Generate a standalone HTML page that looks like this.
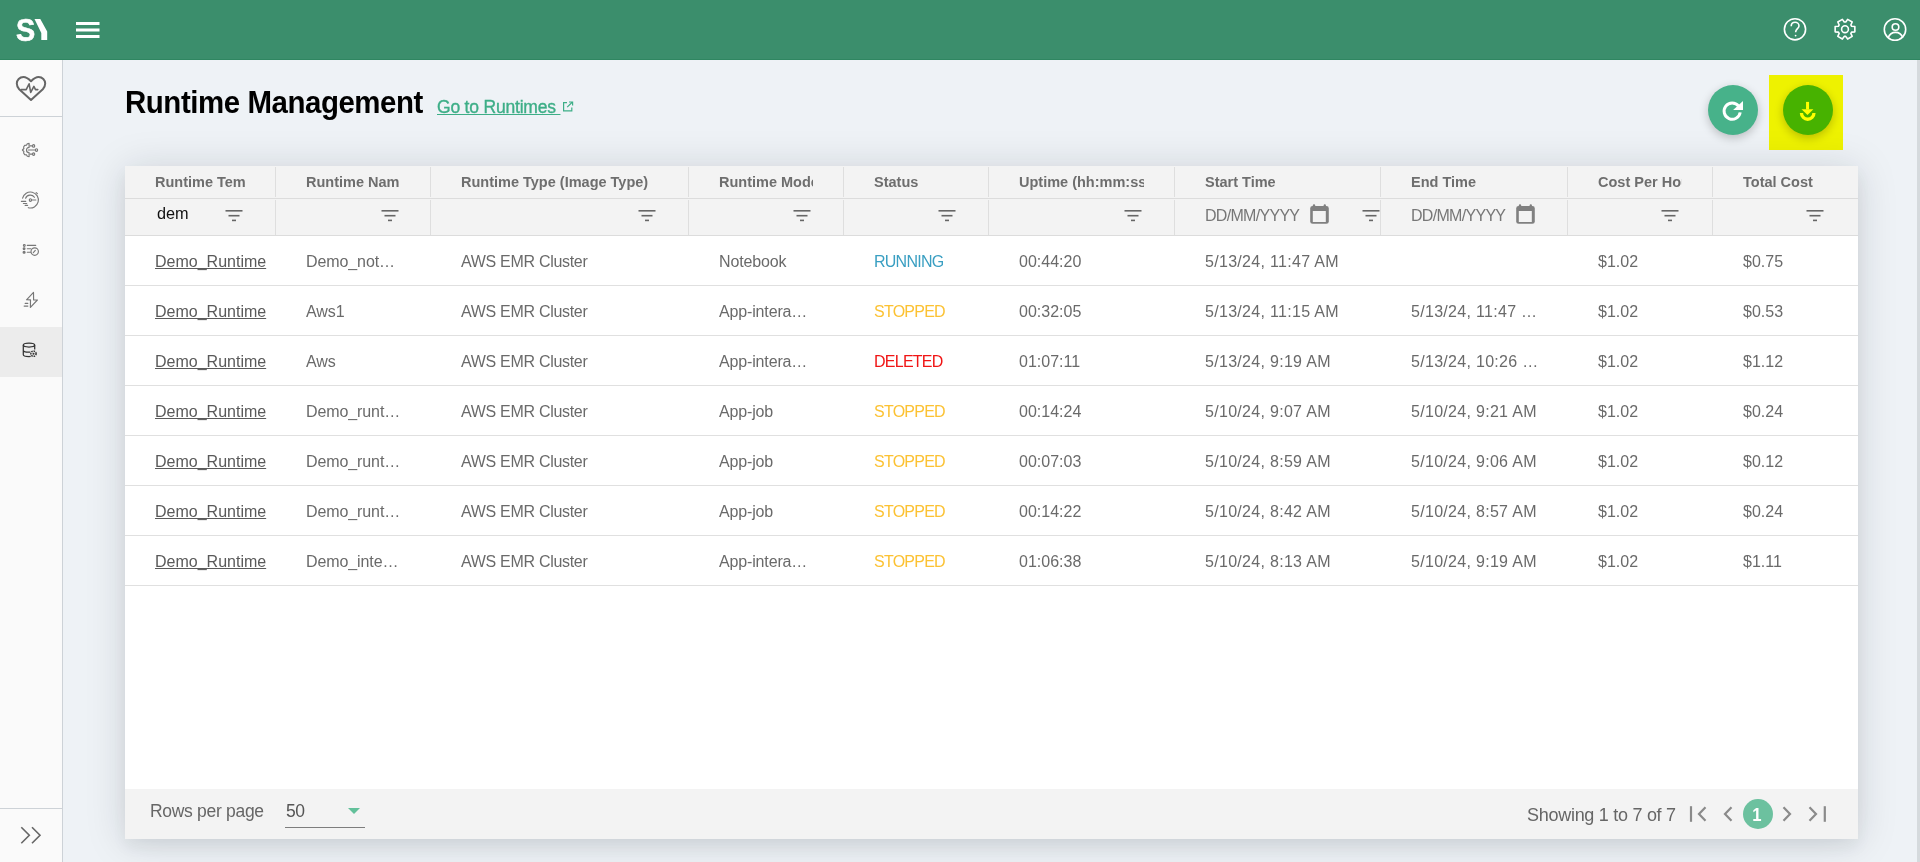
<!DOCTYPE html>
<html>
<head>
<meta charset="utf-8">
<style>
*{box-sizing:border-box;margin:0;padding:0}
html,body{width:1920px;height:862px;overflow:hidden;background:#eef2f6;font-family:"Liberation Sans",sans-serif;position:relative}
.abs{position:absolute}
#top{position:absolute;left:0;top:0;width:1920px;height:60px;background:#3b8e6c;border-bottom:1px solid #2f8661}
#side{position:absolute;left:0;top:60px;width:63px;height:802px;background:#fafafa;border-right:1px solid #cdd2d7}
#rstrip{position:absolute;left:1917px;top:60px;width:3px;height:802px;background:#d5dadd}
#card{position:absolute;left:125px;top:166px;width:1733px;height:673px;background:#fff;box-shadow:0 3px 38px rgba(20,30,40,0.15),0 8px 14px rgba(20,30,40,0.05)}
.hdr1{position:absolute;left:0;top:0;width:1733px;height:33px;background:#f3f3f3;border-bottom:1px solid #dcdcdc}
.hdr2{position:absolute;left:0;top:33px;width:1733px;height:37px;background:#f3f3f3;border-bottom:1px solid #dcdcdc}
.sep{position:absolute;width:1px;background:#dedede}
.ht{position:absolute;top:7px;font-size:14.5px;font-weight:700;color:#6e6e6e;white-space:nowrap;overflow:hidden;line-height:18px}
.row{position:absolute;left:0;width:1733px;height:50px;border-bottom:1px solid #e0e0e0}
.c{position:absolute;top:1px;line-height:49px;font-size:16px;color:#6a6a6a;white-space:nowrap}
.lnk{color:#5a5a5a;text-decoration:underline;text-underline-offset:1px}
.run{color:#3a9fc2}.stop{color:#fcc233}.del{color:#f01515}
#foot{position:absolute;left:0;top:623px;width:1733px;height:50px;background:#f3f3f3}
.btn{position:absolute;width:50px;height:50px;border-radius:50%;box-shadow:0 3px 10px rgba(0,0,0,0.22)}
</style>
</head>
<body>
<div id="top">
  <div class="abs" style="left:15.5px;top:13.6px;font-size:31px;font-weight:700;color:#fff;line-height:34px;transform:scaleX(0.93);transform-origin:0 0;-webkit-text-stroke:0.6px #fff">S</div>
  <svg class="abs" style="left:0;top:0" width="60" height="60"><polygon points="34.5,19 40.3,19 47.2,31.5 47.2,40 41.3,40 41.3,33" fill="#fff"/></svg>
  <svg class="abs" style="left:0;top:0" width="110" height="60">
    <rect x="76" y="22" width="23.5" height="3" fill="#fff"/>
    <rect x="76" y="28.5" width="23.5" height="3" fill="#fff"/>
    <rect x="76" y="35" width="23.5" height="3" fill="#fff"/>
  </svg>
  <svg class="abs" style="left:1770px;top:0" width="150" height="60" fill="none" stroke="#fff" stroke-width="1.6">
    <circle cx="25" cy="29.3" r="10.6"/>
    <path d="M21.2 26.2c0-2.3 1.7-3.9 3.9-3.9s3.9 1.6 3.9 3.6c0 2.6-3.4 3-3.4 6.3"/>
    <circle cx="25.6" cy="35.6" r="0.9" fill="#fff" stroke="none"/>
    <circle cx="75" cy="29.2" r="3.4"/>
    <path d="M81.58 26.27 L84.85 26.56 L84.85 31.84 L81.58 32.13 L80.82 33.43 L82.21 36.41 L77.64 39.05 L75.75 36.36 L74.25 36.36 L72.36 39.05 L67.79 36.41 L69.18 33.43 L68.42 32.13 L65.15 31.84 L65.15 26.56 L68.42 26.27 L69.18 24.97 L67.79 21.99 L72.36 19.35 L74.25 22.04 L75.75 22.04 L77.64 19.35 L82.21 21.99 L80.82 24.97Z" stroke-linejoin="round"/>
    <circle cx="125" cy="29.5" r="10.7"/>
    <circle cx="125.5" cy="27" r="3.3"/>
    <path d="M118.2 37.6c1.2-3.2 4-5.2 7.3-5.2s6.1 2 7.3 5.2"/>
  </svg>
</div>
<div id="side">
  <div class="abs" style="left:0;top:56px;width:62px;height:1px;background:#cdd2d7"></div>
  <svg class="abs" style="left:0;top:0" width="62" height="60" fill="none" stroke="#666" stroke-width="2" stroke-linejoin="round" stroke-linecap="round">
    <path d="M31 21.3c-3-3.2-5.2-4.3-7.6-4.3-3.8 0-6.6 3-6.6 6.6 0 2.1.9 4 2.4 5.6L31 40l11.8-10.8c1.5-1.6 2.4-3.5 2.4-5.6 0-3.6-2.8-6.6-6.6-6.6-2.4 0-4.6 1.1-7.6 4.3z" transform="translate(0,0)"/>
    <path d="M21.2 29.6h5l2.9-5.8 1.6 8.6 3.2-6 1.6 3.2h2.3" stroke-width="1.6"/>
  </svg>
  <div class="abs" style="left:0;top:267px;width:62px;height:50px;background:#ececec"></div>
  <svg class="abs" style="left:0;top:-60px" width="62" height="380" fill="none" stroke="#777" stroke-width="1.15" stroke-linecap="round" stroke-linejoin="round">
    <path d="M29.1 143.4 L27.3 143.7 L26.6 145.1 L24.7 145.4 L23.6 147 L23.9 148.5 L22.4 150 L23.9 151.5 L23.6 153 L24.7 154.6 L26.6 154.9 L27.3 156.3 L29.1 156.6 L29.1 152.6 A2.6 2.6 0 0 1 29.1 147.4 Z"/>
    <path d="M28.4 150 H35.2 M30 145.9 H32.3 M30 154.1 H32.3"/>
    <ellipse cx="33.6" cy="145.9" rx="1.1" ry="1.3"/><ellipse cx="36.5" cy="150" rx="1.1" ry="1.3"/><ellipse cx="33.6" cy="154.1" rx="1.1" ry="1.3"/>
    <path d="M22.6 198.2 A8 8 0 1 1 28.3 207.7"/>
    <path d="M25.6 198.2 A5 5 0 0 1 34.4 197.3"/>
    <ellipse cx="30.4" cy="200" rx="1.1" ry="1.3"/><path d="M31.7 200 H35.8"/>
    <path d="M36.2 192.6 L37.4 193.6"/>
    <path d="M21.4 201.4 H25.7 M23.4 203.5 H26.7 M25.2 205.4 H27.6"/>
    <circle cx="24.3" cy="245.4" r="0.9"/><path d="M27.3 245.4 H35.7"/>
    <circle cx="24.1" cy="248.8" r="0.9" fill="#777"/><path d="M27.3 248.7 H30.8"/>
    <circle cx="24.1" cy="252.2" r="1" fill="#777"/><path d="M27.3 252.2 H30.5"/>
    <circle cx="34.7" cy="251.6" r="3.7"/><path d="M33.3 252.6 L35.3 250.4"/>
    <path d="M33.5 292.4 L26.5 299.8 L30.5 299.9 L30.4 307.4 L37.4 300 L33.6 299.9 Z"/>
    <path d="M25.2 303.3 H27.8 M24.2 306.1 H27.8" stroke-width="1.3"/>
  </svg>
  <svg class="abs" style="left:0;top:267px" width="62" height="50" fill="none" stroke="#333" stroke-width="1.25">
    <ellipse cx="29" cy="18.1" rx="5.7" ry="1.9"/>
    <path d="M23.3 18.1 V27.7 C23.3 28.8 25.8 29.5 29 29.5 C29.6 29.5 30.2 29.5 30.7 29.4 M34.7 18.1 V22.4 M23.3 23.2 C23.3 24.3 25.8 25.2 29 25.2 C29.5 25.2 30 25.2 30.4 25.1"/>
    <circle cx="33.5" cy="26.7" r="2.6" stroke-width="1.5" stroke-dasharray="1.5 0.9"/>
    <circle cx="33.5" cy="26.7" r="1" fill="#333" stroke="none"/>
  </svg>
  <div class="abs" style="left:0;top:748px;width:62px;height:1px;background:#cdd2d7"></div>
  <svg class="abs" style="left:0;top:760px" width="62" height="40" fill="none" stroke="#666" stroke-width="1.6">
    <path d="M21.3 7.2l8 8-8 8 M32 7.2l8 8-8 8"/>
  </svg>
</div>
<div id="rstrip"></div>

<div class="abs" style="left:125px;top:85px;font-size:32px;font-weight:700;color:#000;line-height:34px;letter-spacing:-0.48px;white-space:nowrap;transform:scaleX(0.92);transform-origin:0 0">Runtime Management</div>
<div class="abs" style="left:437px;top:97px;font-size:17.5px;color:#3dae87;line-height:20px;letter-spacing:-0.2px;white-space:nowrap;text-decoration:underline;text-underline-offset:1px;-webkit-text-stroke:0.35px #3dae87">Go to Runtimes&nbsp;</div>
<svg class="abs" style="left:562px;top:101px" width="12" height="11" fill="none" stroke="#3dae87" stroke-width="1.2"><path d="M5 1.6H1.6v8.2h8.2V6.4 M5.2 6.2L10.4 1 M7 1h3.6v3.6"/></svg>

<div class="btn" style="left:1708px;top:85px;background:#47b28a"></div>
<svg class="abs" style="left:1708px;top:85px" width="50" height="50" viewBox="0 0 50 50"><path d="M32.2 27.37 A8.1 8.1 0 1 1 30.58 21.11" fill="none" stroke="#fff" stroke-width="3"/><polygon points="25.1,24.9 35,24.9 35,15.9" fill="#fff"/></svg>
<div class="btn" style="left:1783px;top:85px;background:#47b28a"></div>
<svg class="abs" style="left:1783px;top:85px" width="50" height="50" viewBox="0 0 50 50" fill="#fff"><rect x="23.05" y="16.9" width="3" height="7.6"/><polygon points="18.5,24.2 30.4,24.2 24.5,30"/><path d="M16.8 28 A7.9 7.9 0 0 0 32.6 28 L29.3 28 A4.6 4.6 0 0 1 20.1 28 Z"/></svg>
<div class="abs" style="left:1769px;top:75px;width:74px;height:75px;background:#ffff00;mix-blend-mode:multiply"></div>

<div id="card">
  <div class="hdr1"></div>
  <div class="hdr2"></div>
<div class="ht" style="left:30px;width:90px">Runtime Template</div>
<div class="ht" style="left:181px;width:94px">Runtime Name</div>
<div class="ht" style="left:336px;width:197px">Runtime Type (Image Type)</div>
<div class="ht" style="left:594px;width:94px">Runtime Mode</div>
<div class="ht" style="left:749px;width:84px">Status</div>
<div class="ht" style="left:894px;width:125px">Uptime (hh:mm:ss)</div>
<div class="ht" style="left:1080px;width:145px">Start Time</div>
<div class="ht" style="left:1286px;width:126px">End Time</div>
<div class="ht" style="left:1473px;width:84px">Cost Per Hour</div>
<div class="ht" style="left:1618px;width:85px">Total Cost</div>
<div class="sep" style="left:150px;top:1px;height:30px"></div>
<div class="sep" style="left:150px;top:34px;height:35px"></div>
<div class="sep" style="left:305px;top:1px;height:30px"></div>
<div class="sep" style="left:305px;top:34px;height:35px"></div>
<div class="sep" style="left:563px;top:1px;height:30px"></div>
<div class="sep" style="left:563px;top:34px;height:35px"></div>
<div class="sep" style="left:718px;top:1px;height:30px"></div>
<div class="sep" style="left:718px;top:34px;height:35px"></div>
<div class="sep" style="left:863px;top:1px;height:30px"></div>
<div class="sep" style="left:863px;top:34px;height:35px"></div>
<div class="sep" style="left:1049px;top:1px;height:30px"></div>
<div class="sep" style="left:1049px;top:34px;height:35px"></div>
<div class="sep" style="left:1255px;top:1px;height:30px"></div>
<div class="sep" style="left:1255px;top:34px;height:35px"></div>
<div class="sep" style="left:1442px;top:1px;height:30px"></div>
<div class="sep" style="left:1442px;top:34px;height:35px"></div>
<div class="sep" style="left:1587px;top:1px;height:30px"></div>
<div class="sep" style="left:1587px;top:34px;height:35px"></div>
<div class="abs" style="left:32px;top:37px;font-size:16.3px;color:#111;line-height:20px">dem</div>
<svg class="abs" style="left:100.4px;top:43.5px" width="18" height="12" viewBox="0 0 18 12"><rect x="0.5" y="0" width="17" height="1.6" fill="#666"/><rect x="3.5" y="4.9" width="11" height="1.6" fill="#666"/><rect x="7" y="9.6" width="4" height="1.6" fill="#666"/></svg>
<svg class="abs" style="left:255.5px;top:43.5px" width="18" height="12" viewBox="0 0 18 12"><rect x="0.5" y="0" width="17" height="1.6" fill="#666"/><rect x="3.5" y="4.9" width="11" height="1.6" fill="#666"/><rect x="7" y="9.6" width="4" height="1.6" fill="#666"/></svg>
<svg class="abs" style="left:512.7px;top:43.5px" width="18" height="12" viewBox="0 0 18 12"><rect x="0.5" y="0" width="17" height="1.6" fill="#666"/><rect x="3.5" y="4.9" width="11" height="1.6" fill="#666"/><rect x="7" y="9.6" width="4" height="1.6" fill="#666"/></svg>
<svg class="abs" style="left:667.7px;top:43.5px" width="18" height="12" viewBox="0 0 18 12"><rect x="0.5" y="0" width="17" height="1.6" fill="#666"/><rect x="3.5" y="4.9" width="11" height="1.6" fill="#666"/><rect x="7" y="9.6" width="4" height="1.6" fill="#666"/></svg>
<svg class="abs" style="left:812.7px;top:43.5px" width="18" height="12" viewBox="0 0 18 12"><rect x="0.5" y="0" width="17" height="1.6" fill="#666"/><rect x="3.5" y="4.9" width="11" height="1.6" fill="#666"/><rect x="7" y="9.6" width="4" height="1.6" fill="#666"/></svg>
<svg class="abs" style="left:998.9000000000001px;top:43.5px" width="18" height="12" viewBox="0 0 18 12"><rect x="0.5" y="0" width="17" height="1.6" fill="#666"/><rect x="3.5" y="4.9" width="11" height="1.6" fill="#666"/><rect x="7" y="9.6" width="4" height="1.6" fill="#666"/></svg>
<svg class="abs" style="left:1536.4px;top:43.5px" width="18" height="12" viewBox="0 0 18 12"><rect x="0.5" y="0" width="17" height="1.6" fill="#666"/><rect x="3.5" y="4.9" width="11" height="1.6" fill="#666"/><rect x="7" y="9.6" width="4" height="1.6" fill="#666"/></svg>
<svg class="abs" style="left:1681.2px;top:43.5px" width="18" height="12" viewBox="0 0 18 12"><rect x="0.5" y="0" width="17" height="1.6" fill="#666"/><rect x="3.5" y="4.9" width="11" height="1.6" fill="#666"/><rect x="7" y="9.6" width="4" height="1.6" fill="#666"/></svg>
<svg class="abs" style="left:1237.4px;top:43.5px" width="18" height="12" viewBox="0 0 18 12"><rect x="0.5" y="0" width="17" height="1.6" fill="#666"/><rect x="3.5" y="4.9" width="11" height="1.6" fill="#666"/><rect x="7" y="9.6" width="4" height="1.6" fill="#666"/></svg>
<div class="abs" style="left:1080px;top:40px;font-size:16px;color:#777;line-height:20px;letter-spacing:-0.7px">DD/MM/YYYY</div>
<div class="abs" style="left:1286px;top:40px;font-size:16px;color:#777;line-height:20px;letter-spacing:-0.7px">DD/MM/YYYY</div>
<svg class="abs" style="left:1185px;top:38px" width="20" height="21" viewBox="0 0 20 21"><rect x="0.2" y="2.1" width="18.6" height="17.7" rx="2.4" fill="#808080"/><rect x="2.8" y="7" width="13" height="11" fill="#f3f3f3"/><rect x="2.9" y="0.2" width="2.2" height="3.5" rx="1" fill="#808080"/><rect x="13.7" y="0.2" width="2.2" height="3.5" rx="1" fill="#808080"/></svg>
<svg class="abs" style="left:1391px;top:38px" width="20" height="21" viewBox="0 0 20 21"><rect x="0.2" y="2.1" width="18.6" height="17.7" rx="2.4" fill="#808080"/><rect x="2.8" y="7" width="13" height="11" fill="#f3f3f3"/><rect x="2.9" y="0.2" width="2.2" height="3.5" rx="1" fill="#808080"/><rect x="13.7" y="0.2" width="2.2" height="3.5" rx="1" fill="#808080"/></svg>
<div class="row" style="top:70px"><div class="c" style="left:30px"><span class="lnk">Demo_Runtime</span></div><div class="c" style="left:181px;letter-spacing:-0.1px">Demo_not…</div><div class="c" style="left:336px;letter-spacing:-0.3px">AWS EMR Cluster</div><div class="c" style="left:594px;letter-spacing:-0.15px">Notebook</div><div class="c run" style="left:749px;letter-spacing:-0.75px">RUNNING</div><div class="c" style="left:894px">00:44:20</div><div class="c" style="left:1080px;letter-spacing:0.3px">5/13/24, 11:47 AM</div><div class="c" style="left:1286px;letter-spacing:0.3px"></div><div class="c" style="left:1473px">$1.02</div><div class="c" style="left:1618px">$0.75</div></div>
<div class="row" style="top:120px"><div class="c" style="left:30px"><span class="lnk">Demo_Runtime</span></div><div class="c" style="left:181px;letter-spacing:-0.1px">Aws1</div><div class="c" style="left:336px;letter-spacing:-0.3px">AWS EMR Cluster</div><div class="c" style="left:594px;letter-spacing:-0.15px">App-intera…</div><div class="c stop" style="left:749px;letter-spacing:-0.75px">STOPPED</div><div class="c" style="left:894px">00:32:05</div><div class="c" style="left:1080px;letter-spacing:0.3px">5/13/24, 11:15 AM</div><div class="c" style="left:1286px;letter-spacing:0.3px">5/13/24, 11:47 …</div><div class="c" style="left:1473px">$1.02</div><div class="c" style="left:1618px">$0.53</div></div>
<div class="row" style="top:170px"><div class="c" style="left:30px"><span class="lnk">Demo_Runtime</span></div><div class="c" style="left:181px;letter-spacing:-0.1px">Aws</div><div class="c" style="left:336px;letter-spacing:-0.3px">AWS EMR Cluster</div><div class="c" style="left:594px;letter-spacing:-0.15px">App-intera…</div><div class="c del" style="left:749px;letter-spacing:-0.75px">DELETED</div><div class="c" style="left:894px">01:07:11</div><div class="c" style="left:1080px;letter-spacing:0.3px">5/13/24, 9:19 AM</div><div class="c" style="left:1286px;letter-spacing:0.3px">5/13/24, 10:26 …</div><div class="c" style="left:1473px">$1.02</div><div class="c" style="left:1618px">$1.12</div></div>
<div class="row" style="top:220px"><div class="c" style="left:30px"><span class="lnk">Demo_Runtime</span></div><div class="c" style="left:181px;letter-spacing:-0.1px">Demo_runt…</div><div class="c" style="left:336px;letter-spacing:-0.3px">AWS EMR Cluster</div><div class="c" style="left:594px;letter-spacing:-0.15px">App-job</div><div class="c stop" style="left:749px;letter-spacing:-0.75px">STOPPED</div><div class="c" style="left:894px">00:14:24</div><div class="c" style="left:1080px;letter-spacing:0.3px">5/10/24, 9:07 AM</div><div class="c" style="left:1286px;letter-spacing:0.3px">5/10/24, 9:21 AM</div><div class="c" style="left:1473px">$1.02</div><div class="c" style="left:1618px">$0.24</div></div>
<div class="row" style="top:270px"><div class="c" style="left:30px"><span class="lnk">Demo_Runtime</span></div><div class="c" style="left:181px;letter-spacing:-0.1px">Demo_runt…</div><div class="c" style="left:336px;letter-spacing:-0.3px">AWS EMR Cluster</div><div class="c" style="left:594px;letter-spacing:-0.15px">App-job</div><div class="c stop" style="left:749px;letter-spacing:-0.75px">STOPPED</div><div class="c" style="left:894px">00:07:03</div><div class="c" style="left:1080px;letter-spacing:0.3px">5/10/24, 8:59 AM</div><div class="c" style="left:1286px;letter-spacing:0.3px">5/10/24, 9:06 AM</div><div class="c" style="left:1473px">$1.02</div><div class="c" style="left:1618px">$0.12</div></div>
<div class="row" style="top:320px"><div class="c" style="left:30px"><span class="lnk">Demo_Runtime</span></div><div class="c" style="left:181px;letter-spacing:-0.1px">Demo_runt…</div><div class="c" style="left:336px;letter-spacing:-0.3px">AWS EMR Cluster</div><div class="c" style="left:594px;letter-spacing:-0.15px">App-job</div><div class="c stop" style="left:749px;letter-spacing:-0.75px">STOPPED</div><div class="c" style="left:894px">00:14:22</div><div class="c" style="left:1080px;letter-spacing:0.3px">5/10/24, 8:42 AM</div><div class="c" style="left:1286px;letter-spacing:0.3px">5/10/24, 8:57 AM</div><div class="c" style="left:1473px">$1.02</div><div class="c" style="left:1618px">$0.24</div></div>
<div class="row" style="top:370px"><div class="c" style="left:30px"><span class="lnk">Demo_Runtime</span></div><div class="c" style="left:181px;letter-spacing:-0.1px">Demo_inte…</div><div class="c" style="left:336px;letter-spacing:-0.3px">AWS EMR Cluster</div><div class="c" style="left:594px;letter-spacing:-0.15px">App-intera…</div><div class="c stop" style="left:749px;letter-spacing:-0.75px">STOPPED</div><div class="c" style="left:894px">01:06:38</div><div class="c" style="left:1080px;letter-spacing:0.3px">5/10/24, 8:13 AM</div><div class="c" style="left:1286px;letter-spacing:0.3px">5/10/24, 9:19 AM</div><div class="c" style="left:1473px">$1.02</div><div class="c" style="left:1618px">$1.11</div></div>
  <div id="foot">
    <div class="abs" style="left:25px;top:11px;font-size:17.5px;color:#666;line-height:22px;letter-spacing:-0.3px;white-space:nowrap">Rows per page</div>
    <div class="abs" style="left:161px;top:11px;font-size:17.5px;color:#555;line-height:22px;letter-spacing:-0.5px">50</div>
    <svg class="abs" style="left:223px;top:19px" width="12" height="6"><polygon points="0,0 12,0 6,6" fill="#62c09a"/></svg>
    <div class="abs" style="left:160px;top:38px;width:80px;height:1px;background:#7d7d7d"></div>
    <div class="abs" style="left:1402px;top:15px;font-size:18px;color:#666;line-height:22px;letter-spacing:-0.28px;white-space:nowrap">Showing 1 to 7 of 7</div>
    <svg class="abs" style="left:1555px;top:1px" width="178" height="50" fill="none" stroke="#8a8a8a" stroke-width="2.2">
      <path d="M11 16.2v15.6"/>
      <path d="M25.5 17.2l-6.5 6.8 6.5 6.8"/>
      <path d="M51.5 17.2l-6.5 6.8 6.5 6.8"/>
      <circle cx="78" cy="24" r="15" fill="#6cc19f" stroke="none"/>
      <path d="M103.5 17.2l6.5 6.8-6.5 6.8"/>
      <path d="M129.5 17.2l6.5 6.8-6.5 6.8"/>
      <path d="M144.8 16.2v15.6"/>
    </svg>
    <div class="abs" style="left:1617px;top:15px;width:30px;text-align:center;font-size:18.5px;font-weight:700;transform:scaleX(0.9);color:#fff;line-height:22px">1</div>
  </div>
</div>
</body>
</html>
